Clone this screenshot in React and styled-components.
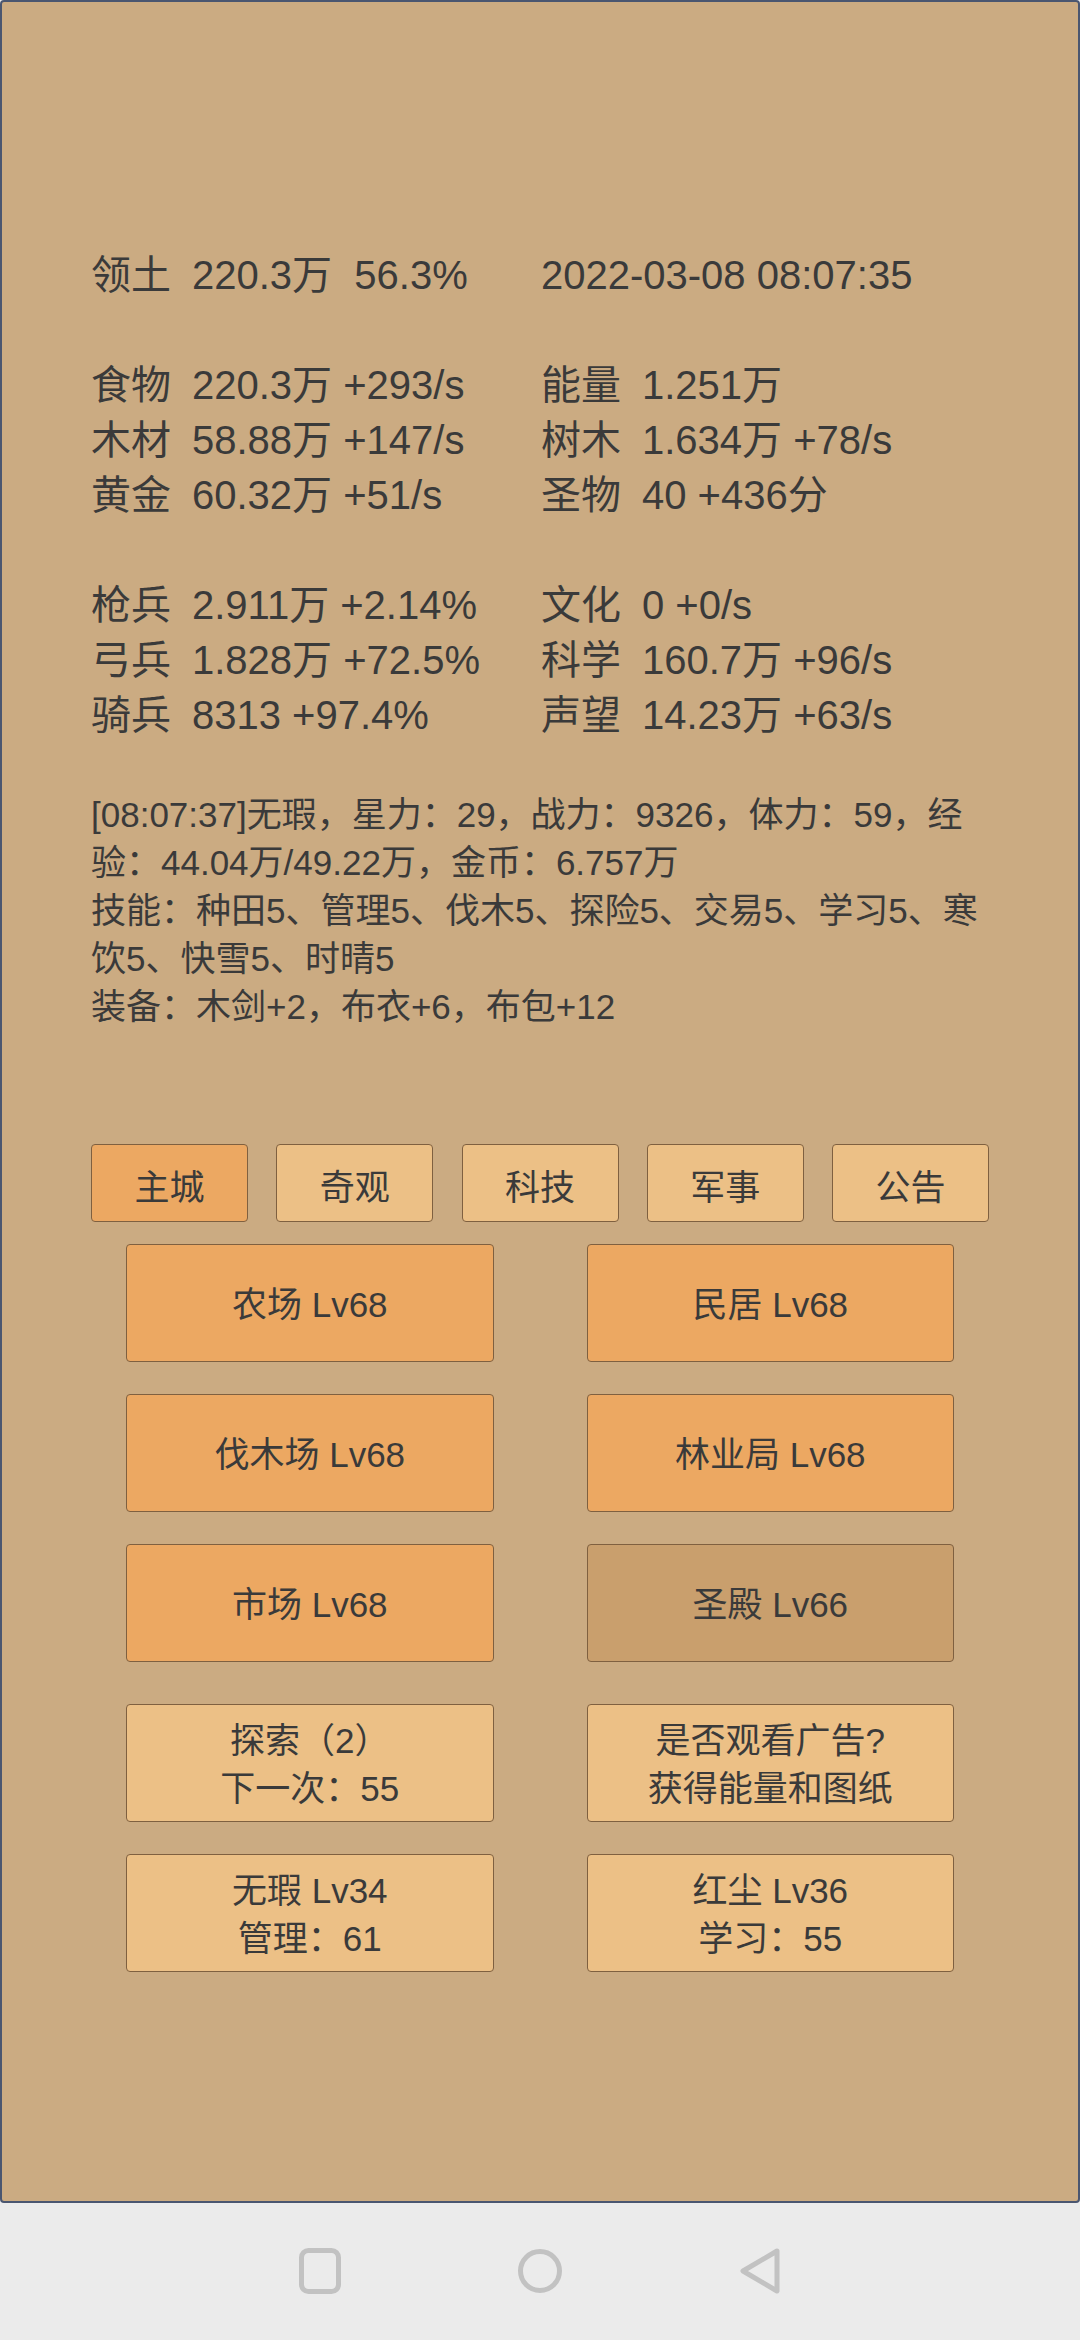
import styled, { createGlobalStyle } from 'styled-components'

const GlobalStyle = createGlobalStyle`
  html, body {
    margin: 0;
    padding: 0;
    background: #ebebeb;
  }
  * {
    box-sizing: border-box;
  }
`

const statGroups = [
  [
    [['领土', '220.3万  56.3%'], [null, '2022-03-08 08:07:35']],
  ],
  [
    [['食物', '220.3万 +293/s'], ['能量', '1.251万']],
    [['木材', '58.88万 +147/s'], ['树木', '1.634万 +78/s']],
    [['黄金', '60.32万 +51/s'], ['圣物', '40 +436分']],
  ],
  [
    [['枪兵', '2.911万 +2.14%'], ['文化', '0 +0/s']],
    [['弓兵', '1.828万 +72.5%'], ['科学', '160.7万 +96/s']],
    [['骑兵', '8313 +97.4%'], ['声望', '14.23万 +63/s']],
  ],
]

const logLines = [
  '[08:07:37]无瑕，星力：29，战力：9326，体力：59，经验：44.04万/49.22万，金币：6.757万',
  '技能：种田5、管理5、伐木5、探险5、交易5、学习5、寒饮5、快雪5、时晴5',
  '装备：木剑+2，布衣+6，布包+12',
]

const tabs = ['主城', '奇观', '科技', '军事', '公告']

const buildings = [
  { name: '农场 Lv68', tone: 'active' },
  { name: '民居 Lv68', tone: 'active' },
  { name: '伐木场 Lv68', tone: 'active' },
  { name: '林业局 Lv68', tone: 'active' },
  { name: '市场 Lv68', tone: 'active' },
  { name: '圣殿 Lv66', tone: 'dim' },
]

const actions = [
  ['探索（2）', '下一次：55'],
  ['是否观看广告?', '获得能量和图纸'],
  ['无瑕 Lv34', '管理：61'],
  ['红尘 Lv36', '学习：55'],
]

const App = () => {
  return (
    <Screen>
      <GlobalStyle />
      <AppFrame>
        <Stats>
          { statGroups.map((group, gi) => (
            <StatGroup key={ gi }>
              { group.map((row, ri) => (
                <StatRow key={ ri }>
                  { row.map(([label, value], ci) => (
                    <StatCell key={ ci }>
                      { label && <StatLabel>{ label }</StatLabel> }
                      { value }
                    </StatCell>
                  )) }
                </StatRow>
              )) }
            </StatGroup>
          )) }
        </Stats>

        <Log>
          { logLines.map((line, i) => <LogLine key={ i }>{ line }</LogLine>) }
        </Log>

        <Tabs>
          { tabs.map((t, i) => (
            <Tab key={ t } tone={ i === 0 ? 'active' : 'light' }>{ t }</Tab>
          )) }
        </Tabs>

        <BuildingGrid>
          { buildings.map(b => (
            <BigButton key={ b.name } tone={ b.tone }>{ b.name }</BigButton>
          )) }
        </BuildingGrid>

        <ActionGrid>
          { actions.map(([a, b]) => (
            <BigButton key={ a } tone="light">
              <span>{ a }</span>
              <span>{ b }</span>
            </BigButton>
          )) }
        </ActionGrid>
      </AppFrame>

      <NavBar>
        <NavIcon viewBox="0 0 46 46">
          <rect x="4.5" y="2.5" width="37" height="41" rx="7" />
        </NavIcon>
        <NavIcon viewBox="0 0 46 46">
          <circle cx="23" cy="23" r="19.5" />
        </NavIcon>
        <NavIcon viewBox="0 0 46 46">
          <path d="M40 3 L6 23 L40 43 Z" />
        </NavIcon>
      </NavBar>
    </Screen>
  )
}

export default App

const tones = {
  active: '#eca862',
  light: '#ecc086',
  dim: '#c99f6d',
}

const Screen = styled.div`
  width: 1080px;
  height: 2340px;
  display: flex;
  flex-direction: column;
  font-family: "Liberation Sans", "Noto Sans CJK SC", sans-serif;
  color: #3a3a3a;
`

const AppFrame = styled.div`
  height: 2203px;
  background: #cbab82;
  border: 2px solid #4a5670;
  border-radius: 4px;
  padding: 246px 89px 0;
  display: flex;
  flex-direction: column;
`

const Stats = styled.div`
  display: flex;
  flex-direction: column;
  gap: 55px;
`

const StatGroup = styled.div`
  display: flex;
  flex-direction: column;
`

const StatRow = styled.div`
  display: grid;
  grid-template-columns: 450px 1fr;
  font-size: 40px;
  line-height: 55px;
  white-space: pre;
`

const StatCell = styled.div`
  display: flex;
`

const StatLabel = styled.span`
  width: 101px;
  flex-shrink: 0;
`

const Log = styled.div`
  margin-top: 48px;
  font-size: 35px;
  line-height: 48px;
`

const LogLine = styled.div``

const Tabs = styled.div`
  margin-top: 113px;
  display: grid;
  grid-template-columns: repeat(5, 157px);
  justify-content: space-between;
`

const Tab = styled.div`
  height: 78px;
  padding-top: 3px;
  background: ${props => tones[props.tone]};
  border: 1.5px solid #7f6040;
  border-radius: 4px;
  display: flex;
  align-items: center;
  justify-content: center;
  font-size: 35px;
`

const BuildingGrid = styled.div`
  margin-top: 22px;
  padding: 0 35px;
  display: grid;
  grid-template-columns: 1fr 1fr;
  column-gap: 93px;
  row-gap: 32px;
`

const ActionGrid = styled(BuildingGrid)`
  margin-top: 42px;
`

const BigButton = styled.div`
  height: 118px;
  padding-top: 4px;
  background: ${props => tones[props.tone]};
  border: 1.5px solid #7f6040;
  border-radius: 4px;
  display: flex;
  flex-direction: column;
  align-items: center;
  justify-content: center;
  font-size: 35px;
  line-height: 48px;
`

const NavBar = styled.div`
  flex: 1;
  display: flex;
  align-items: center;
  justify-content: center;
  gap: 174px;
  padding-bottom: 2px;
`

const NavIcon = styled.svg`
  width: 46px;
  height: 46px;
  fill: none;
  stroke: #c2c2c2;
  stroke-width: 5;
  stroke-linejoin: round;
`
